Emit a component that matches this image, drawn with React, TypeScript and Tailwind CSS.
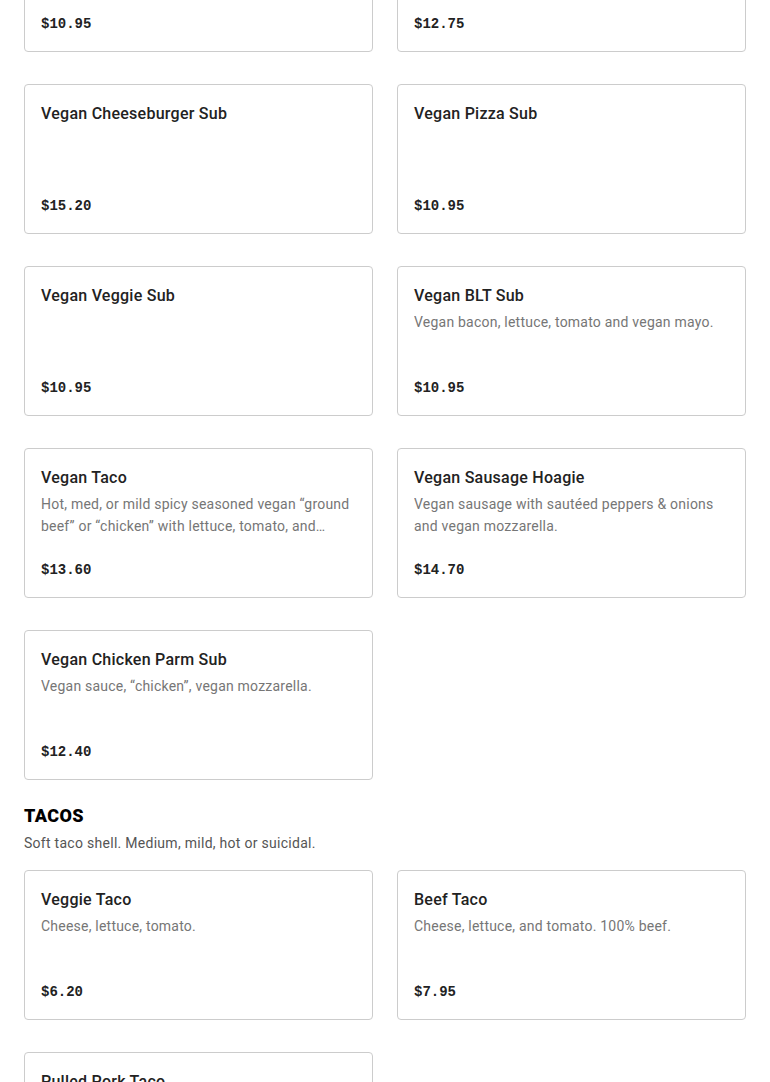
import React from "react";

type Item = { name: string; desc?: string; price: string };

const vegan: Item[] = [
  { name: "Vegan Item", price: "$10.95" },
  { name: "Vegan Item 2", price: "$12.75" },
  { name: "Vegan Cheeseburger Sub", price: "$15.20" },
  { name: "Vegan Pizza Sub", price: "$10.95" },
  { name: "Vegan Veggie Sub", price: "$10.95" },
  { name: "Vegan BLT Sub", desc: "Vegan bacon, lettuce, tomato and vegan mayo.", price: "$10.95" },
  {
    name: "Vegan Taco",
    desc: "Hot, med, or mild spicy seasoned vegan \u201cground beef\u201d or \u201cchicken\u201d with lettuce, tomato, and vegan cheese.",
    price: "$13.60",
  },
  {
    name: "Vegan Sausage Hoagie",
    desc: "Vegan sausage with saut\u00e9ed peppers & onions and vegan mozzarella.",
    price: "$14.70",
  },
  { name: "Vegan Chicken Parm Sub", desc: "Vegan sauce, \u201cchicken\u201d, vegan mozzarella.", price: "$12.40" },
];

const tacos: Item[] = [
  { name: "Veggie Taco", desc: "Cheese, lettuce, tomato.", price: "$6.20" },
  { name: "Beef Taco", desc: "Cheese, lettuce, and tomato. 100% beef.", price: "$7.95" },
  { name: "Pulled Pork Taco", desc: "Pulled pork, cheese, lettuce, tomato.", price: "$8.50" },
];

function Card({ item }: { item: Item }) {
  return (
    <div className="h-[150px] rounded-[4px] border border-[#cccccc] bg-white p-4 flex flex-col justify-between">
      <div>
        <div className="pt-px text-[16px] leading-[24px] font-medium tracking-[0.25px] text-[#222222]">{item.name}</div>
        {item.desc && (
          <div className="mt-[3px] text-[14px] leading-[22px] tracking-[0.22px] text-[#767676] line-clamp-2">{item.desc}</div>
        )}
      </div>
      <div className="text-[14px] leading-[22px] font-bold text-[#222222] [font-family:'Liberation_Mono',monospace]">
        {item.price}
      </div>
    </div>
  );
}

export default function App() {
  return (
    <div className="bg-white min-h-screen px-6 overflow-hidden [font-family:Roboto,'Liberation_Sans',sans-serif]">
      <div className="mt-[-98px] grid grid-cols-2 gap-x-6 gap-y-8">
        {vegan.map((it, i) => (
          <Card key={i} item={it} />
        ))}
      </div>
      <div className="mt-6 text-[18px] leading-[24px] font-black tracking-[0.4px] text-black">TACOS</div>
      <div className="mt-1 text-[14px] leading-[22px] tracking-[0.28px] text-[#555555]">Soft taco shell. Medium, mild, hot or suicidal.</div>
      <div className="mt-4 grid grid-cols-2 gap-x-6 gap-y-8 pb-8">
        {tacos.map((it, i) => (
          <Card key={i} item={it} />
        ))}
      </div>
    </div>
  );
}
